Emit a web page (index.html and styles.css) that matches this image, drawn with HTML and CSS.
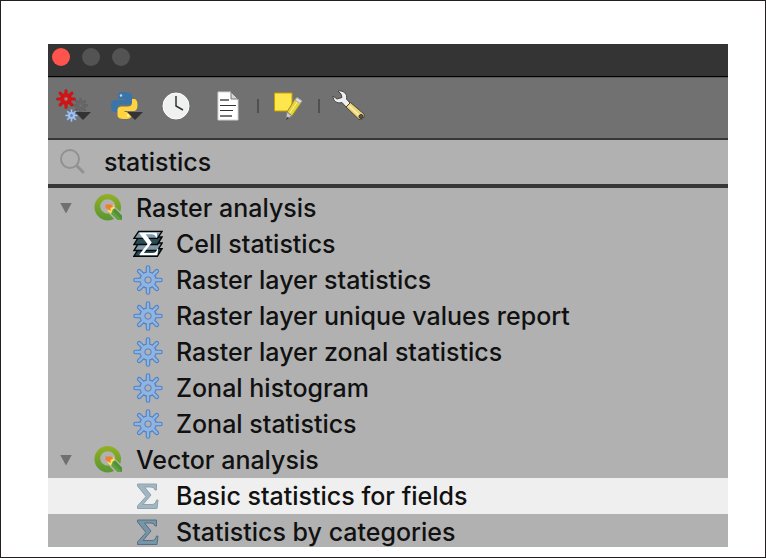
FILE: index.html
```html
<!DOCTYPE html>
<html lang="en">
<head>
<meta charset="utf-8">
<meta name="viewport" content="width=device-width, initial-scale=1">
<title>Processing Toolbox</title>
<link rel="stylesheet" href="styles.css">
</head>
<body>
<svg class="defs" aria-hidden="true">
  <defs>
    <linearGradient id="q-ring" x1="0" y1="0" x2="0" y2="1"><stop offset="0" stop-color="#93b023"/><stop offset="1" stop-color="#589632"/></linearGradient>
    <path id="teeth" d="M0-12.500V12.500M-12.500 0H12.500M-8.800-8.800L8.800 8.800M-8.800 8.800L8.800-8.800"/>
    <symbol id="gear" viewBox="-15 -15 30 30">
      <g class="gear-edge"><use href="#teeth" stroke-width="4.600"/><circle r="8.700"/></g>
      <g class="gear-fill"><use href="#teeth" stroke-width="2.400"/><circle r="7.600"/></g>
      <circle class="gear-hole" r="3.200"/>
    </symbol>
    <symbol id="qgis" viewBox="0 0 28 28">
      <path d="M14 0a13.500 13.200 0 1 0 6 25l-5-5.500a7.500 7.200 0 1 1 6.200-6.500l5 4.700A13.500 13.200 0 0 0 14 0z" fill="url(#q-ring)"/>
      <path d="M16.500 14.500l4-.5 7.500 7.800V26h-4.500l-7-7z" fill="#63a03a"/>
      <path d="M20.500 14l7.500 7.800V26l-8.500-8.500z" fill="#4f9038"/>
      <path d="M14.500 13.500l5-2.500 1.500 3.500-2 .5-2 5-3.500-3.500z" fill="#f5e36a"/>
      <path d="M11.500 10.500h5.500l2.500 2-3 1.500v3l-5-3z" fill="#f0802c"/>
    </symbol>
    <symbol id="sigma" viewBox="0 0 22 26">
      <path d="M.5 1H19.500V7H18Q17.500 4 14 4H7.500L14 12 6 21.500H15Q18.500 21.500 19.500 17H21L20 25.500H.5V23L9 13.500.5 3z" stroke-width="1"/>
    </symbol>
    <symbol id="layers" viewBox="0 0 32 30">
      <g stroke="#050809" stroke-width="1.500">
        <path d="M6 20H31L26 28H1z" fill="#2c4c55"/>
        <path d="M6 14H31L26 22H1z" fill="#8299aa"/>
        <path d="M6 7.500H31L26 15.500H1z" fill="#2c4c55"/>
        <path d="M6 1.500H31L26 9H1z" fill="#8299aa"/>
      </g>
      <path d="M7 3H25.500V8H24.500Q23.500 4.500 20 4.500H13.500L20 13.500 11.500 24.500H21Q25 24.500 26 20H27L26 27H7V26L15.500 15 7 4z" fill="#fff"/>
    </symbol>
  </defs>
</svg>

<main class="window">
  <header class="titlebar">
    <button class="dot close" aria-label="Close"></button>
    <button class="dot" aria-label="Minimize"></button>
    <button class="dot" aria-label="Zoom"></button>
  </header>

  <nav class="toolbar" aria-label="Toolbox actions">
    <button class="tool" aria-label="Models">
      <svg width="36" height="34" viewBox="0 0 36 34">
        <g class="gear-gray"><use href="#gear" x="17" y="9" width="15" height="15"/></g>
        <g class="gear-red"><use href="#gear" x="0" y="0" width="20" height="20"/></g>
        <g class="gear-blue"><use href="#gear" x="9" y="20" width="13" height="13"/></g>
        <path d="M19 23H35L27 31z" fill="#333"/>
      </svg>
    </button>
    <button class="tool python" aria-label="Scripts">
      <svg width="36" height="34" viewBox="0 0 36 34">
        <path d="M14 3c-5 0-6 1.500-6 4v3h7v1H5c-3 0-4 2.500-4 6s1 6 4 6h2.500v-3.500c0-3 2-4 4.500-4h6.500c2.500 0 3.500-1.500 3.500-3.500V7c0-3-2.500-4-8-4z" fill="#3975a8"/>
        <path d="M15 30c5 0 6.500-1.500 6.500-4v-3h-7v-1h9c3 0 4-2.500 4-6s-1-6-3.500-6h-2v3.500c0 3-2 4-4.500 4h-6c-2.500 0-4 1.500-4 3.500V26c0 3 2.500 4 7.500 4z" fill="#ffd440"/>
        <circle cx="11" cy="6.500" r="1.200" fill="#c6d7e4"/><circle cx="18" cy="26.500" r="1.200" fill="#fff3b8"/>
        <path d="M17 23H33L25 31z" fill="#333"/>
      </svg>
    </button>
    <button class="tool clock" aria-label="History">
      <svg width="28" height="28" viewBox="0 0 28 28">
        <circle cx="14" cy="14" r="13" fill="#eff1f1" stroke="#fff"/>
        <path d="M14 4V14L21 18" fill="none" stroke="#333" stroke-width="1.500"/>
      </svg>
    </button>
    <button class="tool report" aria-label="Results viewer">
      <svg width="22" height="30" viewBox="0 0 22 30">
        <path d="M1 1H14L21 8V29H1z" fill="#fff" stroke="#d2d2d2"/>
        <path d="M14 1V8H21z" fill="#d6d6d6" stroke="#777"/>
        <path d="M3 9H12M3 25H15" stroke="#777" stroke-width="2"/>
        <path d="M3 14.500H19M3 19.500H16" stroke="#333" stroke-width="1"/>
      </svg>
    </button>
    <span class="divider"></span>
    <button class="tool edit" aria-label="Edit features in place">
      <svg width="30" height="30" viewBox="0 0 30 30">
        <path d="M1.500 2H19V20H1.500z" fill="#fde74d" stroke="#c9a000"/>
        <path d="M22 8L28 12 19 25 14 21z" fill="#e7d43c" stroke="#9a8a20"/>
        <path d="M24.500 10.500L16.500 22.500" stroke="#fff38c"/>
        <path d="M24 6.500L29 10 27 12.500 22 9z" fill="#ddd" stroke="#aaa"/>
        <path d="M14 21L19 25 13 28z" fill="#ccc" stroke="#888"/><path d="M14 26L13 29 16 27z" fill="#333"/>
      </svg>
    </button>
    <span class="divider"></span>
    <button class="tool options" aria-label="Options">
      <svg width="34" height="32" viewBox="0 0 34 32">
        <path d="M6 1C11 0 16 4 14.500 9L18 13 14 17 10 12.500C5 14 1 11 1 6L5 9 10 7.500 9 4z" fill="#eee" stroke="#444"/>
        <path d="M14 17L18.500 12.500 32 24C33 27 31 30 27 29.500z" fill="#e9d27c" stroke="#4b4530"/>
        <path d="M17 15.500L27 25.500" stroke="#f9e9a5" stroke-width="2"/>
        <circle cx="29" cy="26.500" r="2" fill="#555" stroke="#333"/>
      </svg>
    </button>
  </nav>

  <label class="search">
    <svg width="26" height="26" viewBox="0 0 26 26" fill="none" stroke="#919191" stroke-width="2" aria-hidden="true"><circle cx="10" cy="10" r="9"/><path d="M17 17L23 23" stroke-width="3" stroke-linecap="round"/></svg>
    <input type="text" value="statistics" aria-label="Search">
  </label>

  <ul class="tree">
    <li class="row group"><span class="arrow"></span><svg class="logo"><use href="#qgis"/></svg><span>Raster analysis</span></li>
    <li class="row"><svg class="icon"><use href="#layers"/></svg><span>Cell statistics</span></li>
    <li class="row"><svg class="icon"><use href="#gear"/></svg><span>Raster layer statistics</span></li>
    <li class="row"><svg class="icon"><use href="#gear"/></svg><span>Raster layer unique values report</span></li>
    <li class="row"><svg class="icon"><use href="#gear"/></svg><span>Raster layer zonal statistics</span></li>
    <li class="row"><svg class="icon"><use href="#gear"/></svg><span>Zonal histogram</span></li>
    <li class="row"><svg class="icon"><use href="#gear"/></svg><span>Zonal statistics</span></li>
    <li class="row group"><span class="arrow"></span><svg class="logo"><use href="#qgis"/></svg><span>Vector analysis</span></li>
    <li class="row selected"><svg class="icon sigma"><use href="#sigma"/></svg><span>Basic statistics for fields</span></li>
    <li class="row last"><svg class="icon sigma"><use href="#sigma"/></svg><span>Statistics by categories</span></li>
  </ul>
</main>
</body>
</html>
```
FILE: styles.css
```css
* { box-sizing: border-box; }

body {
  margin: 0;
  min-height: 100vh;
  padding: 43px 37px 10px 47px;
  border: 1px solid #231f20;
  background: #fff;
  color: #111;
  font: 500 25px/36px Inter, "Liberation Sans", sans-serif;
}

.defs { position: absolute; width: 0; height: 0; }

svg { display: block; flex: none; }

button {
  padding: 0;
  border: 0;
  background: none;
}

.window { background: #b1b1b1; overflow: hidden; }

.titlebar {
  display: flex;
  gap: 12px;
  height: 33px;
  padding: 4px;
  background: #343434;
  border-bottom: 1px solid #000;
}

.dot {
  width: 18px;
  height: 18px;
  border-radius: 50%;
  background: #535353;
}

.close { background: #ff534d; }

.toolbar {
  display: flex;
  align-items: center;
  height: 63px;
  padding: 0 8px 4px;
  background: #717171;
  border-top: 1px solid #5c5c5c;
  border-bottom: 2px solid #373737;
}

.python { margin-left: 18px; }
.clock { margin-left: 16px; }
.report { margin-left: 27px; }
.edit { margin-left: 14px; }
.options { margin-left: 12px; }

.divider {
  width: 2px;
  height: 14px;
  margin-left: 18px;
  background: #505050;
}

.edit + .divider { margin-left: 15px; }

.search {
  display: flex;
  align-items: center;
  gap: 18px;
  height: 48px;
  padding-left: 12px;
  border-bottom: 4px solid #373739;
}

.search input {
  flex: 1;
  min-width: 0;
  padding: 0;
  border: 0;
  outline: 0;
  background: none;
  color: inherit;
  font: inherit;
}

.tree {
  margin: 0;
  padding: 2px 0 0;
  list-style: none;
}

.row {
  display: flex;
  align-items: center;
  gap: 13px;
  height: 36px;
  padding-left: 85px;
  white-space: nowrap;
}

.group { padding-left: 12px; }
.selected { background: #efefef; }
.last { height: 33px; align-items: flex-start; }

.arrow {
  width: 12px;
  height: 11px;
  margin-right: 8px;
  background: #707070;
  clip-path: polygon(0 0, 100% 0, 50% 100%);
}

.logo { width: 30px; height: 28px; }
.icon { width: 30px; height: 30px; }
.sigma { height: 26px; fill: #a2b6c2; stroke: #8da2b0; }
.last .sigma { margin-top: 5px; fill: #7894a7; stroke: #537084; }

.gear-edge { fill: var(--edge, #4b82c8); stroke: var(--edge, #4b82c8); stroke-linecap: round; }
.gear-edge circle, .gear-fill circle { stroke: none; }
.gear-fill { fill: var(--fill, #91b3e0); stroke: var(--fill, #91b3e0); stroke-linecap: round; }
.gear-hole { fill: var(--hole, #b1b1b1); stroke: var(--edge, #4b82c8); stroke-width: 1; }

.gear-red { --edge: #c41212; --fill: #d41414; --hole: #a98080; }
.gear-gray { --edge: #5e5e5e; --fill: #686868; --hole: #747474; }
.gear-blue { --edge: #7da4dc; --fill: #a5c3ef; --hole: #6681a5; }
```
